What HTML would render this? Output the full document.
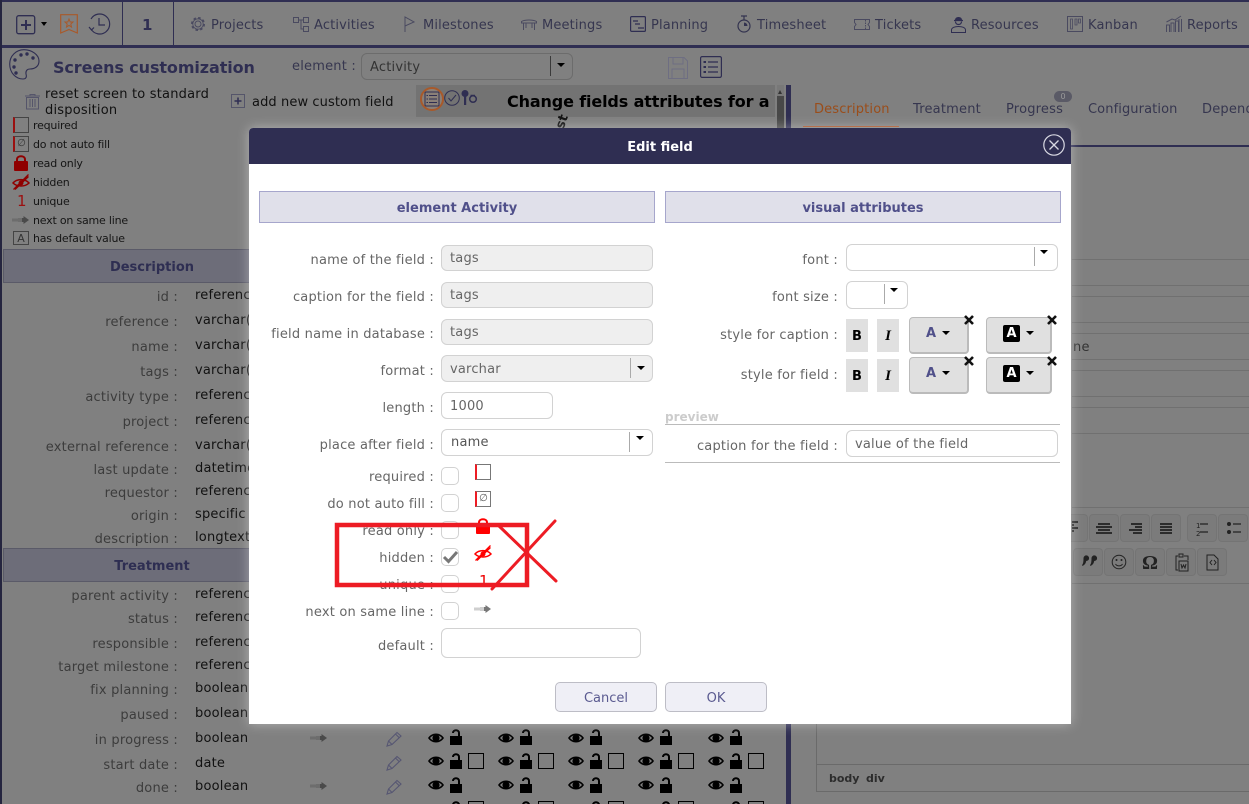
<!DOCTYPE html>
<html><head><meta charset="utf-8"><title>Screens customization</title>
<style>
html,body{margin:0;padding:0}
body{width:1249px;height:804px;overflow:hidden;position:relative;background:#808080;font-family:"DejaVu Sans",sans-serif;font-size:13px;letter-spacing:.2px}
.t,.b{position:absolute;white-space:nowrap;line-height:20px}
.l,.v,.m,.r{position:absolute;white-space:nowrap;line-height:24px}
.b{box-sizing:border-box;letter-spacing:0}
.n{position:absolute;top:16px;line-height:20px;color:#36364f;white-space:nowrap;letter-spacing:.15px}
.l{left:0;width:178px;text-align:right;color:#3c3c3c}
.v{left:195px;color:#111}
.m{left:249px;width:185px;text-align:right;color:#666}
.r{left:665px;width:173px;text-align:right;color:#666}
.leg{position:absolute;left:33px;font-size:11px;line-height:18px;color:#151515;white-space:nowrap;letter-spacing:-.2px}
.f{position:absolute;box-sizing:border-box;border:1px solid #d2d2d2;border-radius:6px;background:#fff;color:#666;line-height:27px;padding-left:8px}
.g{background:#efefef}
.c{position:absolute;left:441px;width:18px;height:18px;box-sizing:border-box;border:1px solid #d2d2d2;border-radius:5px;background:#fff}
.car{position:absolute;width:0;height:0;border-left:4px solid transparent;border-right:4px solid transparent;border-top:4px solid #000}
.dv{position:absolute;width:1px;background:#aaa}
.sec{position:absolute;box-sizing:border-box;background:#e0e0ea;border:1px solid #a6a6cc;top:191px;height:32px;text-align:center;font-weight:bold;color:#50508a;line-height:34px;letter-spacing:0}
.hd{position:absolute;left:3px;width:298px;height:34px;box-sizing:border-box;background:#6d6d79;border:1px solid #5a5a68;font-weight:bold;color:#2e2e52;text-align:center;line-height:36px;letter-spacing:0}
.bt{position:absolute;background:#e0e0e0;width:22px;height:33px;text-align:center;line-height:35px;font-weight:bold;color:#000;font-family:"DejaVu Sans",sans-serif;letter-spacing:0}
.ab{position:absolute;box-sizing:border-box;background:#e0e0e0;border:1px solid #bbb;border-bottom-width:2px;border-right-width:2px;border-radius:4px;height:37px}
.hl{position:absolute;left:1072px;width:177px;height:1px;background:#707070}
.tb{position:absolute;box-sizing:border-box;width:30px;height:28px;background:#7b7b7b;border:1px solid #747474;border-radius:4px}
.w{position:absolute;top:0;left:0}
svg{position:absolute;overflow:visible}
</style></head><body>
<svg width="0" height="0" style="position:absolute"><defs>
<g id="eye"><path d="M0 6C4 0 12 0 16 6C12 12 4 12 0 6Z" fill="#000"/><path d="M2 6C5 2.2 11 2.2 14 6C11 9.800 5 9.800 2 6Z" fill="#808080"/><circle cx="8" cy="6" r="3.600" fill="#000"/></g>
<g id="lock"><rect x="0" y="7" width="12" height="9" fill="#000"/><path d="M3 4C3 .3 9 .3 9 4V7" fill="none" stroke="#000" stroke-width="2"/></g>
<g id="arr"><path d="M0 3.500v3M2 3.500v3M4 3.500v3M6 3v4M8 3v4" stroke="currentColor" stroke-width=".7"/><path d="M9 3h1.500V1L16 5L10.500 9V7H9Z" fill="currentColor"/></g>
<g id="pen"><path d="M1 15L2.500 10L11 1.500L15 5L6 13.500Z M2.500 10L6 13.500 M9.500 3L13 6.500" fill="none" stroke="#565672" stroke-width="1.100"/></g>
</defs></svg>

<!-- top bar -->
<div class="b" style="left:0;top:0;width:1249px;height:2px;background:#2f2e52"></div>
<div class="b" style="left:0;top:45px;width:1249px;height:3px;background:#2f2e52"></div>
<div class="b" style="left:0;top:0;width:2px;height:804px;background:#25253f"></div>
<div class="b" style="left:122px;top:2px;width:1px;height:43px;background:#2f2e52"></div>
<div class="b" style="left:173px;top:2px;width:1px;height:43px;background:#2f2e52"></div>
<svg style="left:16px;top:15px" width="20" height="20" viewBox="0 0 20 20"><rect x=".7" y=".7" width="18" height="18" rx="2" fill="none" stroke="#2f2e52" stroke-width="1.300"/><path d="M10 5V15M5 10H15" stroke="#2f2e52" stroke-width="2"/></svg>
<div class="car" style="left:41px;top:22px;border-left-width:3.500px;border-right-width:3.500px"></div>
<svg style="left:60px;top:14px" width="18" height="20" viewBox="0 0 18 20"><path d="M.7 .7H17.300V19L9 15.500L.7 19Z" fill="none" stroke="#a8592a" stroke-width="1.200"/><path d="M9 5L10.200 8H13L10.800 10L11.500 13L9 11.400L6.500 13L7.200 10L5 8H7.800Z" fill="none" stroke="#a8592a"/></svg>
<svg style="left:88px;top:13px" width="22" height="22" viewBox="0 0 22 22"><path d="M3 16A10 10 0 1 0 3 6" fill="none" stroke="#2f2e52" stroke-width="1.200"/><path d="M11 5V12H17" fill="none" stroke="#2f2e52" stroke-width="1.200"/><path d="M1 14L3.500 17L6 14.500" fill="none" stroke="#2f2e52" stroke-width="1.200"/></svg>
<div class="t" style="left:142px;top:16px;font-weight:bold;font-size:15px;line-height:18px;color:#2f2e52">1</div>

<svg style="left:190px;top:16px" width="16" height="16" viewBox="0 0 16 16"><circle cx="8" cy="8" r="3" fill="none" stroke="#4a4a60"/><circle cx="8" cy="8" r="6" fill="none" stroke="#4a4a60" stroke-width="2" stroke-dasharray="2.500 2.200"/><circle cx="8" cy="8" r="5.200" fill="none" stroke="#4a4a60" stroke-width=".8"/></svg>
<div class="n" style="left:211px">Projects</div>
<svg style="left:293px;top:17px" width="16" height="15" viewBox="0 0 16 15"><path d="M.5 .5h5v5h-5zM10.500 .5h5v5h-5zM10.500 9.500h5v5h-5zM5.500 3h5M8 3v9h2.500" fill="none" stroke="#4a4a60"/></svg>
<div class="n" style="left:314px">Activities</div>
<svg style="left:404px;top:16px" width="11" height="16" viewBox="0 0 11 16"><path d="M1 16V1L10 6L1 10" fill="none" stroke="#4a4a60"/></svg>
<div class="n" style="left:423px">Milestones</div>
<svg style="left:521px;top:19px" width="16" height="11" viewBox="0 0 16 11"><path d="M.5 2.500C4 .5 12 .5 15.500 2.500V4H.5ZM2.500 4V11M5 4V9M11 4V9M13.500 4V11" fill="none" stroke="#4a4a60"/></svg>
<div class="n" style="left:542px">Meetings</div>
<svg style="left:630px;top:16px" width="16" height="16" viewBox="0 0 16 16"><rect x=".6" y=".6" width="14.800" height="14.800" rx="1" fill="none" stroke="#2f2e52" stroke-width="1.200"/><path d="M3 5H8M5 8H10M8 12H14" stroke="#2f2e52" stroke-width="1.300"/></svg>
<div class="n" style="left:651px">Planning</div>
<svg style="left:737px;top:15px" width="14" height="18" viewBox="0 0 14 18"><circle cx="7" cy="11" r="6" fill="none" stroke="#33334f" stroke-width="1.200"/><path d="M4 1H10M7 1V5" stroke="#33334f" stroke-width="1.200"/><path d="M7 7.500V11H10.500A3.500 3.500 0 0 0 7 7.500Z" fill="#33334f"/></svg>
<div class="n" style="left:757px">Timesheet</div>
<svg style="left:854px;top:19px" width="16" height="11" viewBox="0 0 16 11"><path d="M.5 .5H15.500V3.500L14 5.500L15.500 7.500V10.500H.5V7.500L2 5.500L.5 3.500Z" fill="none" stroke="#4a4a60"/><path d="M11.500 1V10" stroke="#4a4a60" stroke-dasharray="1.500 1"/></svg>
<div class="n" style="left:875px">Tickets</div>
<svg style="left:951px;top:15px" width="15" height="18" viewBox="0 0 15 18"><path d="M4 5C4 1 11 1 11 5Z" fill="#2f2e52"/><path d="M3 5.500H12" stroke="#2f2e52" stroke-width="1.300"/><path d="M4.500 6.500C4.500 10.500 10.500 10.500 10.500 6.500" fill="none" stroke="#2f2e52" stroke-width="1.200"/><path d="M.5 17.500V15C.5 12.500 4 11.500 7.500 11.500S14.500 12.500 14.500 15V17.500Z" fill="none" stroke="#2f2e52"/></svg>
<div class="n" style="left:971px">Resources</div>
<svg style="left:1067px;top:16px" width="16" height="16" viewBox="0 0 16 16"><rect x=".5" y=".5" width="15" height="15" fill="none" stroke="#4a4a60"/><path d="M3.500 3v10h2V3zM8 3v6h2V3z M11.500 3V7h2V3z" fill="none" stroke="#4a4a60" stroke-width=".8"/></svg>
<div class="n" style="left:1088px">Kanban</div>
<svg style="left:1166px;top:16px" width="16" height="16" viewBox="0 0 16 16"><path d="M.5 16V9h3v7M5 16V7h3v9M9.500 16V5h3v11M13 16V3M15.500 16V3" fill="none" stroke="#4a4a60"/><path d="M.5 6L6 3L9 4L15 0" fill="none" stroke="#4a4a60"/></svg>
<div class="n" style="left:1187px">Reports</div>

<!-- left title -->
<svg style="left:9px;top:49px" width="31" height="31" viewBox="0 0 31 31"><path d="M15 .7C7 .7 .7 7 .7 15C.7 24 7 30 14 30C17 30 18 28 17 25C16.500 22 18 20 21 20C25 20 30 18 30 12C30 6 23 .7 15 .7Z" fill="none" stroke="#2f2e52" stroke-width="1.100"/><g fill="#2f2e52"><circle cx="6" cy="11" r="1.700"/><circle cx="12" cy="6" r="1.700"/><circle cx="18" cy="5" r="1.700"/><circle cx="24" cy="9" r="1.700"/><circle cx="5" cy="18" r="1.700"/><circle cx="7" cy="24" r="1.700"/></g></svg>
<div class="t" style="left:53px;top:57px;font-size:16px;line-height:21px;font-weight:bold;letter-spacing:-.1px;color:#2f2e52">Screens customization</div>
<div class="t" style="left:292px;top:57px;color:#36364f">element :</div>
<div class="b" style="left:361px;top:53px;width:212px;height:27px;border:1px solid #6c6c6c;border-radius:6px"></div>
<div class="t" style="left:370px;top:58px;color:#333">Activity</div>
<div class="dv" style="left:550px;top:56px;height:20px;background:#3a3a3a"></div>
<div class="car" style="left:557px;top:63px"></div>
<svg style="left:668px;top:57px" width="20" height="22" viewBox="0 0 20 22"><path d="M.5 .5H16L19.500 4V21.500H.5ZM5 .5V7H15V.5M4 21.500V12H16V21.500" fill="none" stroke="#6e6e82"/></svg>
<svg style="left:700px;top:56px" width="22" height="22" viewBox="0 0 22 22"><rect x=".6" y=".6" width="20.800" height="20.800" rx="1.500" fill="none" stroke="#2f2e52" stroke-width="1.200"/><path d="M8 6H18M8 11H18M8 16H18" stroke="#2f2e52" stroke-width="1.300"/><path d="M3.500 6H6M3.500 11H6M3.500 16H6" stroke="#2f2e52" stroke-width="2"/></svg>

<svg style="left:25px;top:94px" width="15" height="15" viewBox="0 0 15 15"><path d="M0 2H15M5 2V.5H10V2M1.500 3.500H13.500V15H1.500ZM5 5V13M7.500 5V13M10 5V13" fill="none" stroke="#55556a"/></svg>
<div class="t" style="left:45px;top:85px;color:#111">reset screen to standard</div>
<div class="t" style="left:45px;top:101px;color:#111">disposition</div>
<svg style="left:231px;top:94px" width="14" height="14" viewBox="0 0 14 14"><rect x=".5" y=".5" width="13" height="13" fill="none" stroke="#55556a"/><path d="M7 3.500V10.500M3.500 7H10.500" stroke="#2f2e52" stroke-width="1.500"/></svg>
<div class="t" style="left:252px;top:93px;color:#111;letter-spacing:.1px">add new custom field</div>

<!-- legend -->
<div class="b" style="left:13px;top:117px;width:16px;height:16px;border:1px solid #444;border-left:2px solid #9b1010"></div>
<div class="leg" style="top:117px">required</div>
<div class="b" style="left:13px;top:136px;width:16px;height:16px;border:1px solid #444;border-left:2px solid #9b1010;font-size:10px;line-height:14px;text-align:center;color:#333">∅</div>
<div class="leg" style="top:136px">do not auto fill</div>
<svg style="left:14px;top:155px" width="14" height="16" viewBox="0 0 14 16"><rect y="6" width="14" height="10" rx="1" fill="#8f0000"/><path d="M3 7V4.500C3 .2 11 .2 11 4.500V7" fill="none" stroke="#8f0000" stroke-width="2"/></svg>
<div class="leg" style="top:155px">read only</div>
<svg style="left:13px;top:174px" width="16" height="16" viewBox="0 0 16 16"><path d="M0 9C4 4.500 12 4.500 16 9C12 13 4 13 0 9Z" fill="none" stroke="#8f0000" stroke-width="1.500"/><circle cx="8" cy="9" r="2.500" fill="#8f0000"/><path d="M.5 15.500L15.500 .5M2 15.500L15.500 2.500" stroke="#8f0000" stroke-width="1.300"/></svg>
<div class="leg" style="top:174px">hidden</div>
<div class="t" style="left:17px;top:191px;color:#9b1010;font-size:15px">1</div>
<div class="leg" style="top:193px">unique</div>
<svg style="left:13px;top:215px;color:#4a4a4a" width="16" height="10" viewBox="0 0 16 10"><use href="#arr"/></svg>
<div class="leg" style="top:212px">next on same line</div>
<div class="b" style="left:13px;top:231px;width:16px;height:14px;border:1px solid #444;font-size:11px;line-height:13px;text-align:center;color:#333">A</div>
<div class="leg" style="top:230px">has default value</div>

<!-- left table -->
<div class="hd" style="top:249px">Description</div>
<div class="l" style="top:286px">id :</div><div class="v" style="top:284px">reference</div>
<div class="l" style="top:311px">reference :</div><div class="v" style="top:309px">varchar(</div>
<div class="l" style="top:336px">name :</div><div class="v" style="top:334px">varchar(</div>
<div class="l" style="top:361px">tags :</div><div class="v" style="top:359px">varchar(</div>
<div class="l" style="top:386px">activity type :</div><div class="v" style="top:384px">reference</div>
<div class="l" style="top:411px">project :</div><div class="v" style="top:409px">reference</div>
<div class="l" style="top:436px">external reference :</div><div class="v" style="top:434px">varchar(</div>
<div class="l" style="top:459px">last update :</div><div class="v" style="top:457px">datetime</div>
<div class="l" style="top:482px">requestor :</div><div class="v" style="top:480px">reference</div>
<div class="l" style="top:505px">origin :</div><div class="v" style="top:503px">specific</div>
<div class="l" style="top:528px">description :</div><div class="v" style="top:526px">longtext</div>
<div class="hd" style="top:548px">Treatment</div>
<div class="l" style="top:585px">parent activity :</div><div class="v" style="top:583px">reference</div>
<div class="l" style="top:608px">status :</div><div class="v" style="top:606px">reference</div>
<div class="l" style="top:633px">responsible :</div><div class="v" style="top:631px">reference</div>
<div class="l" style="top:656px">target milestone :</div><div class="v" style="top:654px">reference</div>
<div class="l" style="top:679px">fix planning :</div><div class="v" style="top:677px">boolean</div>
<div class="l" style="top:704px">paused :</div><div class="v" style="top:702px">boolean</div>
<div class="l" style="top:729px">in progress :</div><div class="v" style="top:727px">boolean</div>
<div class="l" style="top:754px">start date :</div><div class="v" style="top:752px">date</div>
<div class="l" style="top:777px">done :</div><div class="v" style="top:775px">boolean</div>

<svg style="left:311px;top:733px;color:#4a4a4a" width="16" height="10" viewBox="0 0 16 10"><use href="#arr"/></svg>
<svg style="left:311px;top:781px;color:#4a4a4a" width="16" height="10" viewBox="0 0 16 10"><use href="#arr"/></svg>
<svg style="left:386px;top:731px" width="16" height="16" viewBox="0 0 16 16"><use href="#pen"/></svg>
<svg style="left:386px;top:755px" width="16" height="16" viewBox="0 0 16 16"><use href="#pen"/></svg>
<svg style="left:386px;top:779px" width="16" height="16" viewBox="0 0 16 16"><use href="#pen"/></svg>

<svg class="w" width="1249" height="804" viewBox="0 0 1249 804">
<g id="grp"><use href="#eye" x="428" y="732"/><use href="#lock" x="450" y="729"/>
<use href="#eye" x="428" y="755"/><use href="#lock" x="450" y="753"/><rect x="468.500" y="753.500" width="15" height="15" fill="none" stroke="#000"/>
<use href="#eye" x="428" y="779"/><use href="#lock" x="450" y="777"/>
<use href="#lock" x="450" y="801"/><rect x="468.500" y="801.500" width="15" height="15" fill="none" stroke="#000"/></g>
<use href="#grp" x="70"/><use href="#grp" x="140"/><use href="#grp" x="210"/><use href="#grp" x="280"/>
</svg>

<!-- middle header -->
<div class="b" style="left:416px;top:85px;width:359px;height:32px;background:#737373"></div>
<svg style="left:420px;top:87px" width="62" height="24" viewBox="0 0 62 24"><circle cx="12" cy="12" r="11" fill="#8a8078" stroke="#a8592a" stroke-width="2"/><rect x="5" y="5" width="14" height="14" rx="1" fill="none" stroke="#2f2e52"/><path d="M9 8.500H17M9 12H17M9 15.500H17M6.500 8.500H8M6.500 12H8M6.500 15.500H8" stroke="#2f2e52"/><circle cx="32" cy="11" r="7.300" fill="none" stroke="#2f2e52"/><path d="M28.500 11L31 14L36 8" fill="none" stroke="#2f2e52"/><circle cx="45" cy="6.500" r="3.500" fill="#2f2e52"/><rect x="44" y="9" width="2.200" height="9" fill="#2f2e52"/><circle cx="53" cy="12" r="3.300" fill="none" stroke="#2f2e52" stroke-width="1.500"/><path d="M50.500 8.500H55" stroke="#2f2e52" stroke-width="1.500"/></svg>
<div class="t" style="left:507px;top:91px;font-size:16px;line-height:22px;font-weight:bold;letter-spacing:-.14px;color:#000">Change fields attributes for a</div>
<div class="t" style="left:556px;top:112px;font-size:13px;font-weight:bold;letter-spacing:0;color:#111;transform:rotate(-70deg)">st</div>
<div class="b" style="left:777px;top:85px;width:7px;height:45px;background:#787878"></div>
<div class="b" style="left:777px;top:96px;width:7px;height:34px;background:#484848"></div>
<div class="car" style="left:778px;top:90px;border-top:0;border-bottom:4px solid #333;border-left-width:2.500px;border-right-width:2.500px"></div>
<div class="b" style="left:786px;top:85px;width:5px;height:719px;background:#2f2e52"></div>

<!-- right tabs -->
<div class="t" style="left:814px;top:100px;color:#9a4d1a;letter-spacing:.15px">Description</div>
<div class="b" style="left:803px;top:126px;width:96px;height:1px;background:#a8552a"></div>
<div class="t" style="left:913px;top:100px;color:#36364f">Treatment</div>
<div class="t" style="left:1006px;top:100px;color:#36364f">Progress</div>
<div class="b" style="left:1054px;top:91px;width:18px;height:11px;background:#5a5a66;border-radius:6px;color:#999;font-size:8px;line-height:11px;text-align:center">0</div>
<div class="t" style="left:1088px;top:100px;color:#36364f;letter-spacing:.1px">Configuration</div>
<div class="t" style="left:1202px;top:100px;color:#36364f">Dependencies</div>
<div class="b" style="left:1071px;top:145px;width:178px;height:2px;background:#2f2e52"></div>
<div class="hl" style="top:259px"></div><div class="hl" style="top:285px"></div><div class="hl" style="top:296px"></div>
<div class="hl" style="top:322px"></div><div class="hl" style="top:333px"></div><div class="hl" style="top:359px"></div>
<div class="hl" style="top:370px"></div><div class="hl" style="top:396px"></div><div class="hl" style="top:407px"></div>
<div class="hl" style="top:433px"></div><div class="hl" style="top:507px"></div><div class="hl" style="top:583px"></div>
<div class="t" style="left:1073px;top:338px;color:#333">ne</div>

<!-- editor toolbar -->
<div class="tb" style="left:1058px;top:514px"></div>
<div class="tb" style="left:1089px;top:514px"></div><div class="tb" style="left:1120px;top:514px"></div><div class="tb" style="left:1151px;top:514px"></div>
<div class="tb" style="left:1187px;top:514px"></div><div class="tb" style="left:1218px;top:514px"></div>
<div class="tb" style="left:1073px;top:548px"></div><div class="tb" style="left:1104px;top:548px"></div><div class="tb" style="left:1135px;top:548px"></div>
<div class="tb" style="left:1166px;top:548px"></div><div class="tb" style="left:1197px;top:548px"></div>
<svg class="w" width="1249" height="804" viewBox="0 0 1249 804">
<path d="M1072 522H1078M1072 525H1074M1072 528H1078M1072 531H1074M1098 524H1110M1096 527H1112M1098 530H1110M1096 533H1112M1131 524H1142M1135 527H1142M1129 530H1142M1133 533H1142M1160 524H1172M1160 527H1172M1160 530H1172M1160 533H1172" stroke="#222" stroke-width="1.800"/>
<path d="M1200 524H1208M1200 532H1208M1233 524H1241M1233 532H1241" stroke="#222" stroke-width="1.200"/>
<text x="1196" y="528" font-size="7" fill="#222" font-family="DejaVu Sans">1</text><text x="1196" y="536" font-size="7" fill="#222" font-family="DejaVu Sans">2</text>
<circle cx="1229" cy="524" r="2" fill="#222"/><circle cx="1229" cy="532" r="2" fill="#222"/>
<path d="M1083.500 558a2.800 2.800 0 1 1 2.700 3C1085.800 563.500 1084.500 565 1082.500 566L1082 565C1083 564 1083.500 562.500 1083.500 558ZM1091.500 558a2.800 2.800 0 1 1 2.700 3C1093.800 563.500 1092.500 565 1090.500 566L1090 565C1091 564 1091.500 562.500 1091.500 558Z" fill="#222"/>
<circle cx="1119" cy="562" r="6.800" fill="none" stroke="#222"/><circle cx="1116.500" cy="560" r="1" fill="#222"/><circle cx="1121.500" cy="560" r="1" fill="#222"/><path d="M1115.500 564C1117 566.500 1121 566.500 1122.500 564" fill="none" stroke="#222"/>
<text x="1142" y="569" font-size="20" font-weight="bold" fill="#222" font-family="Liberation Serif, serif">Ω</text>
<path d="M1178 556H1176V570H1178M1184 556H1188V560M1179 554H1183V557H1179ZM1179 561H1188V571H1179ZM1181 564L1182 568L1183.500 565L1185 568L1186 564" fill="none" stroke="#222"/>
<path d="M1207 555H1214L1218 559V570H1207ZM1212 560L1210 562.500L1212 565M1214 560L1216 562.500L1214 565" fill="none" stroke="#222"/>
</svg>
<div class="b" style="left:816px;top:720px;width:1px;height:72px;background:#6a6a6a"></div>
<div class="b" style="left:816px;top:764px;width:433px;height:1px;background:#6a6a6a"></div>
<div class="b" style="left:816px;top:791px;width:433px;height:1px;background:#6a6a6a"></div>
<div class="t" style="left:829px;top:769px;font-size:11px;font-weight:bold;letter-spacing:0;color:#2c2c2c">body</div>
<div class="t" style="left:866px;top:769px;font-size:11px;font-weight:bold;letter-spacing:0;color:#2c2c2c">div</div>

<!-- dialog -->
<div class="b" style="left:249px;top:128px;width:822px;height:596px;background:#fff;border-radius:4px 4px 0 0;box-shadow:0 0 12px rgba(255,255,255,.4)"></div>
<div class="b" style="left:249px;top:128px;width:822px;height:36px;background:#2f2e52;border-radius:4px 4px 0 0;color:#fff;font-weight:bold;text-align:center;line-height:39px;font-size:13px">Edit field</div>
<svg style="left:1043px;top:134px" width="22" height="22" viewBox="0 0 22 22"><circle cx="11" cy="11" r="10.200" fill="none" stroke="#d8d8e2" stroke-width="1.200"/><path d="M6.500 6.500L15.500 15.500M15.500 6.500L6.500 15.500" stroke="#d8d8e2" stroke-width="1.300"/></svg>

<div class="sec" style="left:259px;width:396px">element Activity</div>
<div class="sec" style="left:665px;width:396px">visual attributes</div>

<div class="m" style="top:249px">name of the field :</div><div class="f g" style="left:441px;top:245px;width:212px;height:26px;line-height:26px">tags</div>
<div class="m" style="top:286px">caption for the field :</div><div class="f g" style="left:441px;top:282px;width:212px;height:26px;line-height:26px">tags</div>
<div class="m" style="top:323px">field name in database :</div><div class="f g" style="left:441px;top:319px;width:212px;height:26px;line-height:26px">tags</div>
<div class="m" style="top:360px">format :</div><div class="f g" style="left:441px;top:355px;width:212px;height:27px">varchar</div>
<div class="dv" style="left:630px;top:358px;height:20px"></div><div class="car" style="left:637px;top:366px"></div>
<div class="m" style="top:397px">length :</div><div class="f" style="left:441px;top:392px;width:112px;height:27px">1000</div>
<div class="m" style="top:434px">place after field :</div><div class="f" style="left:441px;top:429px;width:212px;height:27px;padding-left:9px;color:#555;line-height:25px">name</div>
<div class="dv" style="left:629px;top:432px;height:20px"></div><div class="car" style="left:636px;top:436px"></div>

<div class="m" style="top:466px">required :</div><div class="c" style="top:467px"></div>
<div class="b" style="left:475px;top:464px;width:16px;height:16px;border:1px solid #777;border-left:2px solid #ed1c24"></div>
<div class="m" style="top:493px">do not auto fill :</div><div class="c" style="top:494px"></div>
<div class="b" style="left:475px;top:491px;width:16px;height:16px;border:1px solid #777;border-left:2px solid #ed1c24;font-size:10px;line-height:14px;text-align:center;color:#555">∅</div>
<div class="m" style="top:520px">read only :</div><div class="c" style="top:521px"></div>
<svg style="left:476px;top:518px" width="14" height="16" viewBox="0 0 14 16"><rect y="6" width="14" height="10" rx="1" fill="#f00"/><path d="M3 7V4.500C3 .2 11 .2 11 4.500V7" fill="none" stroke="#f00" stroke-width="2"/></svg>
<div class="m" style="top:547px">hidden :</div><div class="c" style="top:548px"></div>
<svg style="left:443px;top:550px" width="15" height="14" viewBox="0 0 15 14"><path d="M1 7L5.500 11.500L14 2" fill="none" stroke="#777" stroke-width="3"/></svg>
<svg style="left:475px;top:545px" width="16" height="16" viewBox="0 0 16 16"><path d="M0 9C4 4.500 12 4.500 16 9C12 13 4 13 0 9Z" fill="none" stroke="#f00" stroke-width="1.500"/><circle cx="8" cy="9" r="2.500" fill="#f00"/><path d="M.5 15.500L15.500 .5M2 15.500L15.500 2.500" stroke="#f00" stroke-width="1.300"/></svg>
<div class="m" style="top:574px">unique :</div><div class="c" style="top:575px"></div>
<div class="t" style="left:479px;top:571px;color:#e00;font-size:15px">1</div>
<div class="m" style="top:601px">next on same line :</div><div class="c" style="top:602px"></div>
<svg style="left:475px;top:604px;color:#777" width="16" height="10" viewBox="0 0 16 10"><use href="#arr"/></svg>
<div class="m" style="top:635px">default :</div><div class="f" style="left:441px;top:628px;width:200px;height:30px"></div>

<div class="r" style="top:249px">font :</div><div class="f" style="left:846px;top:244px;width:212px;height:27px"></div>
<div class="dv" style="left:1034px;top:247px;height:19px"></div><div class="car" style="left:1040px;top:250px"></div>
<div class="r" style="top:286px">font size :</div><div class="f" style="left:846px;top:281px;width:62px;height:28px"></div>
<div class="dv" style="left:884px;top:284px;height:20px"></div><div class="car" style="left:890px;top:288px"></div>

<div class="r" style="top:324px">style for caption :</div>
<div class="bt" style="left:846px;top:319px">B</div>
<div class="bt" style="left:877px;top:319px;font-family:'Liberation Serif',serif;font-style:italic;font-size:15px">I</div>
<div class="ab" style="left:909px;top:317px;width:60px"></div>
<div class="t" style="left:926px;top:324px;font-weight:bold;letter-spacing:0;color:#50508a">A</div><div class="car" style="left:942px;top:331px"></div>
<div class="ab" style="left:986px;top:317px;width:66px"></div>
<div class="t" style="left:1003px;top:325px;width:17px;height:17px;background:#000;border-radius:2px;color:#fff;font-weight:bold;letter-spacing:0;text-align:center;line-height:17px">A</div><div class="car" style="left:1026px;top:331px"></div>
<div class="r" style="top:364px">style for field :</div>
<div class="bt" style="left:846px;top:359px">B</div>
<div class="bt" style="left:877px;top:359px;font-family:'Liberation Serif',serif;font-style:italic;font-size:15px">I</div>
<div class="ab" style="left:909px;top:357px;width:60px"></div>
<div class="t" style="left:926px;top:364px;font-weight:bold;letter-spacing:0;color:#50508a">A</div><div class="car" style="left:942px;top:371px"></div>
<div class="ab" style="left:986px;top:357px;width:66px"></div>
<div class="t" style="left:1003px;top:365px;width:17px;height:17px;background:#000;border-radius:2px;color:#fff;font-weight:bold;letter-spacing:0;text-align:center;line-height:17px">A</div><div class="car" style="left:1026px;top:371px"></div>
<svg class="w" width="1249" height="804" viewBox="0 0 1249 804"><path d="M965 316L973 324M973 316L965 324M1048 316L1056 324M1056 316L1048 324M965 357L973 365M973 357L965 365M1048 357L1056 365M1056 357L1048 365" stroke="#111" stroke-width="2.600"/></svg>

<div class="t" style="left:665px;top:407px;font-size:12px;font-weight:bold;letter-spacing:0;color:#ccc">preview</div>
<div class="b" style="left:665px;top:424px;width:395px;height:1px;background:#bbb"></div>
<div class="r" style="top:435px">caption for the field :</div>
<div class="f" style="left:846px;top:430px;width:212px;height:27px">value of the field</div>
<div class="b" style="left:665px;top:462px;width:395px;height:1px;background:#bbb"></div>

<div class="b" style="left:555px;top:682px;width:102px;height:30px;background:#efeff6;border:1px solid #bdbdc6;border-radius:5px;text-align:center;line-height:32px;color:#5a5a90;font-size:13px">Cancel</div>
<div class="b" style="left:665px;top:682px;width:102px;height:30px;background:#efeff6;border:1px solid #bdbdc6;border-radius:5px;text-align:center;line-height:32px;color:#5a5a90;font-size:13px">OK</div>

<!-- annotation -->
<svg class="w" width="1249" height="804" viewBox="0 0 1249 804"><rect x="337" y="525" width="190" height="60" fill="none" stroke="#ed1c24" stroke-width="4.500"/><path d="M498 525L556 581M555 521L492 589" fill="none" stroke="#ed1c24" stroke-width="3" stroke-linecap="round"/></svg>
</body></html>
